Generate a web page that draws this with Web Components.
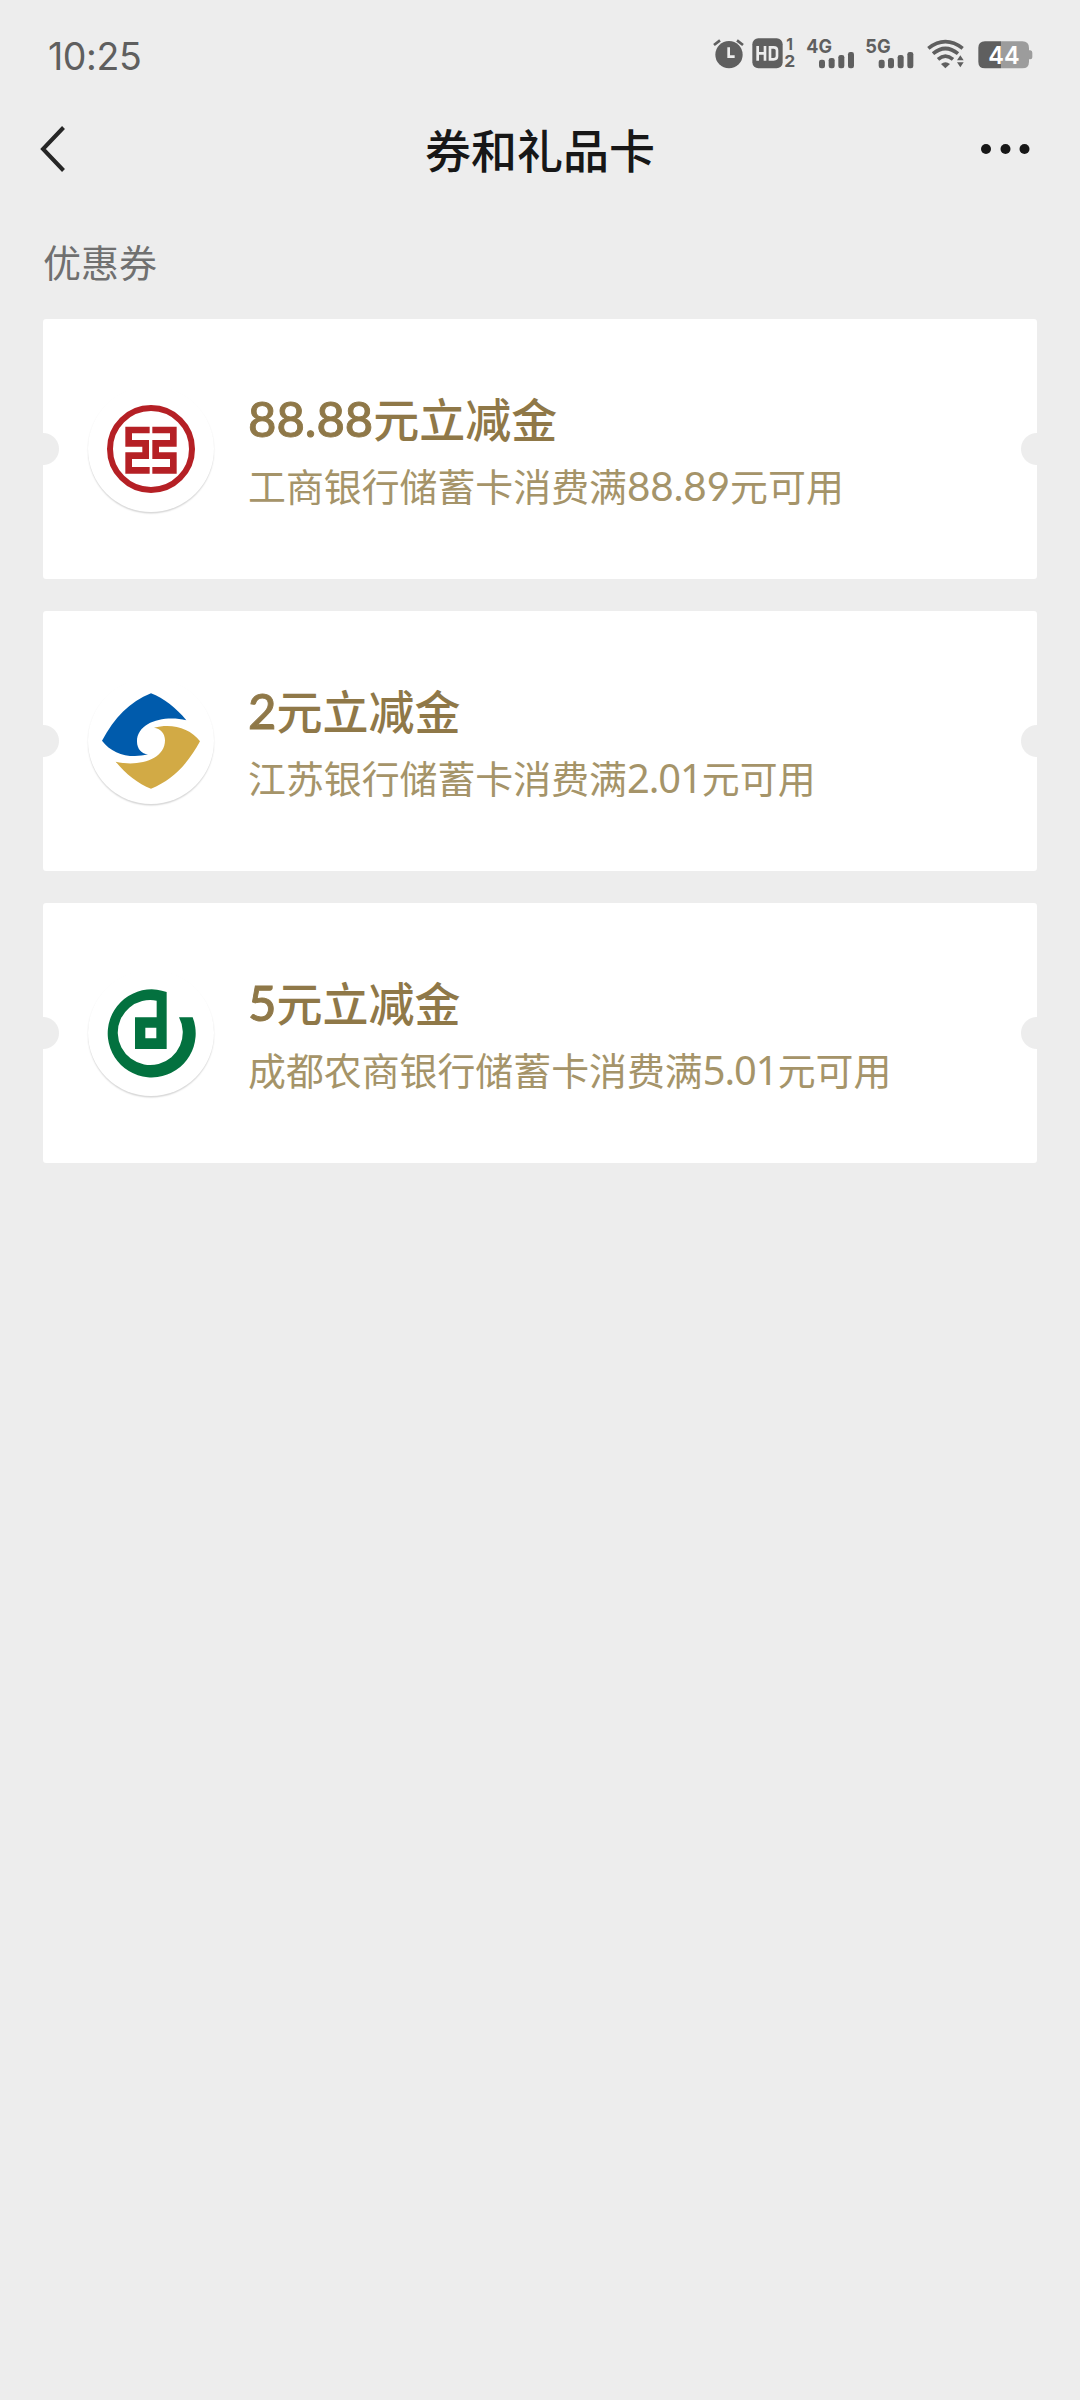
<!DOCTYPE html>
<html lang="zh-CN">
<head>
<meta charset="utf-8">
<title>券和礼品卡</title>
<style>
html,body{margin:0;background:#ededed}
body{font-family:"Noto Sans CJK SC",sans-serif}
</style>
</head>
<body>
<coupon-page></coupon-page>
<script>
const define = (name, html) => customElements.define(name, class extends HTMLElement {
  constructor() {
    super();
    this.attachShadow({ mode: 'open' }).innerHTML = html.trim();
  }
});

define('status-bar', `
<style>
:host{display:flex;height:72px;padding:36px 30px 0 48px;box-sizing:border-box;justify-content:space-between;color:#5f5f5f}
.time{font:400 37.500px/42px Inter,sans-serif;letter-spacing:-.4px}
.icons{display:flex;height:36px}
svg{display:block;height:35px;fill:#5f5f5f;overflow:visible}
text{font-family:Inter,sans-serif;font-weight:700}
</style>
<div class="time">10:25</div>
<div class="icons">
<svg width="35" viewBox="40 50 105 105"><circle cx="88" cy="106" r="41"/><path d="M43 77 61 63M112 63 130 77" stroke="#5f5f5f" stroke-width="8"/><path d="M87 84V112H105" fill="none" stroke="#ededed" stroke-width="8"/></svg>
<svg width="52.67" viewBox="145 50 158 105"><rect x="158" y="57" width="91" height="90" rx="18"/><path d="M174 80V124M196 80V124M174 102H196M211 84H222Q232 84 232 93V111Q232 120 222 120H211Z" fill="none" stroke="#ededed" stroke-width="8"/><text x="260" y="93" font-size="49" textLength="20" lengthAdjust="spacingAndGlyphs">1</text><text x="254" y="144" font-size="49" textLength="33" lengthAdjust="spacingAndGlyphs">2</text></svg>
<svg width="59.33" viewBox="303 50 178 105"><text x="319" y="101" font-size="58" textLength="77" lengthAdjust="spacingAndGlyphs">4G</text><g><rect x="357" y="121" width="18" height="26" rx="7"/><rect x="386" y="116" width="18" height="31" rx="7"/><rect x="415" y="107" width="18" height="40" rx="7"/><rect x="444" y="98" width="18" height="49" rx="7"/></g></svg>
<svg width="60.33" viewBox="481 50 181 105"><text x="497" y="101" font-size="58" textLength="76" lengthAdjust="spacingAndGlyphs">5G</text><g><rect x="537" y="121" width="18" height="26" rx="7"/><rect x="565" y="116" width="18" height="31" rx="7"/><rect x="594" y="107" width="18" height="40" rx="7"/><rect x="623" y="98" width="18" height="49" rx="7"/></g></svg>
<svg width="50" viewBox="662 50 150 105"><path d="M684 87Q735 47 787 87M698 103Q735 72 773 103M713 120Q735 101 758 120" fill="none" stroke="#5f5f5f" stroke-width="11"/><path d="M722 134Q735 123 749 134L735 147Z"/><path d="M770 123 780 108 790 123ZM770 129H790L780 144Z"/></svg>
<svg width="79.33" viewBox="812 50 238 105"><path d="M854 66H966Q986 66 986 86V93H990Q996 94 996 100V114Q996 120 990 120H986V127Q986 147 966 147H902V66Z" fill="#9c9c9c"/><path d="M854 66H902V147H854Q834 147 834 127V86Q834 66 854 66Z"/><text x="864" y="134" font-size="73" textLength="94" lengthAdjust="spacingAndGlyphs" style="fill:#fff;font-weight:600">44</text></svg>
</div>`);

define('nav-bar', `
<style>
:host{display:flex;height:153px;box-sizing:border-box;padding:0 49px 0 39px;align-items:center;justify-content:space-between}
.side{flex:1;display:flex}
.side.end{justify-content:flex-end}
h1{margin:0 0 2px 10px;font:500 46px/60px "Noto Sans CJK SC",sans-serif;color:#171717}
svg{display:block}
</style>
<div class="side"><svg width="28" height="48" viewBox="0 0 28 48"><path d="M24.5 2.5 4 24 24.500 45.500" fill="none" stroke="#262626" stroke-width="4"/></svg></div>
<h1><slot></slot></h1>
<div class="side end"><svg width="52" height="12" viewBox="0 0 52 12" fill="#171717"><circle cx="7" cy="6" r="5"/><circle cx="26.500" cy="6" r="5"/><circle cx="45.500" cy="6" r="5"/></svg></div>`);

const logos = {
  icbc: `<svg viewBox="174 228 378 378"><circle cx="363" cy="417" r="123" fill="none" stroke="#b52025" stroke-width="18"/><path d="M359 360H296V400H347V437H296V481H359M367 360H430V400H377V437H430V481H367" fill="none" stroke="#b52025" stroke-width="20"/></svg>`,
  jiangsu: `<svg viewBox="174 234 378 378"><path d="M363 280C401 294 440 325 469 361C405 345 321 365 321 425C321 446 335 461 354 463C300 477 246 462 216 422C253 354 299 305 363 280Z" fill="#005bac"/><path d="M363 280C401 294 440 325 469 361C405 345 321 365 321 425C321 446 335 461 354 463C300 477 246 462 216 422C253 354 299 305 363 280Z" fill="#d2aa45" transform="rotate(180 363 423)"/></svg>`,
  chengdu: `<svg viewBox="174 239 378 378"><path fill="#03713f" fill-rule="evenodd" d="M410 305A132 132 0 1 0 488 381H447A97.500 97.500 0 1 1 380 331V381H315V476H410ZM346 412H379V444H346Z"/></svg>`
};

customElements.define('bank-logo', class extends HTMLElement {
  constructor() { super(); this.attachShadow({ mode: 'open' }); }
  connectedCallback() {
    this.shadowRoot.innerHTML = `
<style>:host{display:block;width:126px;height:126px;border-radius:50%;box-shadow:0 1.500px 1.500px rgba(0,0,0,.16)}svg{display:block;width:126px;height:126px}</style>${logos[this.getAttribute('bank')]}`;
  }
});

define('num-text', `<style>
:host{display:inline;font-family:Lato,sans-serif;font-size:1.065em;line-height:0;-webkit-text-stroke:var(--num-stroke,0)}
:host([plain]){font-family:"Noto Sans",sans-serif;font-size:1.05em;letter-spacing:-1px}
</style><slot></slot>`);

define('coupon-card', `
<style>
:host{display:flex;box-sizing:border-box;height:260px;padding:0 45px;align-items:center;gap:34px;border-radius:3px;
background:radial-gradient(circle at 0 50%,#ededed 15.500px,transparent 16.500px),radial-gradient(circle at 100% 50%,#ededed 15.500px,transparent 16.500px),#fff}
.text{padding-top:3px;white-space:nowrap}
.title{font:500 46px/67px "Noto Sans CJK SC",sans-serif;color:#8f7848;--num-stroke:.9px}
.desc{font:400 37.900px/67px "Noto Sans CJK SC",sans-serif;color:#a59469}
</style>
<slot name="logo"></slot>
<div class="text"><div class="title"><slot name="title"></slot></div><div class="desc"><slot></slot></div></div>`);

define('coupon-page', `
<style>
:host{display:block;min-height:2400px;background:#ededed}
h2{margin:0;padding:8px 43px 30px;font:400 38px/56px "Noto Sans CJK SC",sans-serif;color:#707070}
.list{display:flex;flex-direction:column;gap:32px;padding:0 43px}
</style>
<status-bar></status-bar>
<nav-bar>券和礼品卡</nav-bar>
<h2>优惠券</h2>
<div class="list">
<coupon-card><bank-logo slot="logo" bank="icbc"></bank-logo><span slot="title"><num-text>88.88</num-text>元立减金</span>工商银行储蓄卡消费满<num-text>88.89</num-text>元可用</coupon-card>
<coupon-card><bank-logo slot="logo" bank="jiangsu"></bank-logo><span slot="title"><num-text>2</num-text>元立减金</span>江苏银行储蓄卡消费满<num-text plain>2.01</num-text>元可用</coupon-card>
<coupon-card><bank-logo slot="logo" bank="chengdu"></bank-logo><span slot="title"><num-text>5</num-text>元立减金</span>成都农商银行储蓄卡消费满<num-text plain>5.01</num-text>元可用</coupon-card>
</div>`);
</script>
</body>
</html>
